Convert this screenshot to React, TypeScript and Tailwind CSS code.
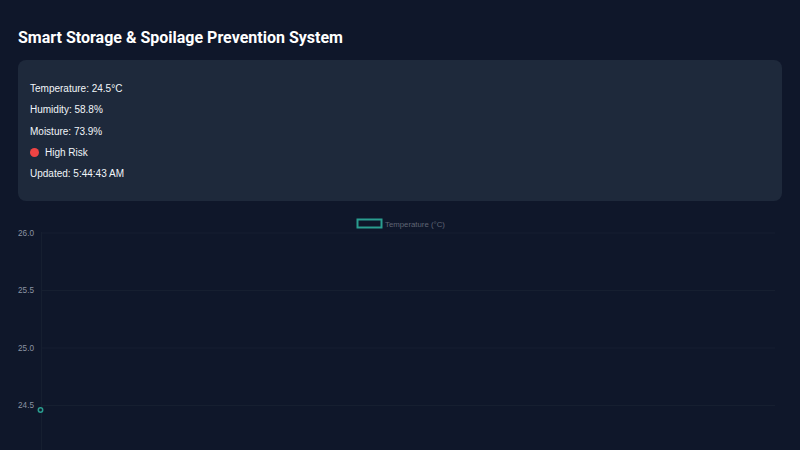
import React from 'react';

const readings = [
  'Temperature: 24.5°C',
  'Humidity: 58.8%',
  'Moisture: 73.9%',
];

const ticks = [
  { label: '26.0', y: 14.5 },
  { label: '25.5', y: 72 },
  { label: '25.0', y: 129.5 },
  { label: '24.5', y: 187 },
];

const TempChart: React.FC = () => (
  <svg width="764" height="240" viewBox="0 0 764 240" className="block">
    <rect x="339.5" y="1.5" width="24" height="8" fill="none" stroke="#2a9d8f" strokeWidth="2" />
    <text x="367" y="8.5" fontSize="7.8" fill="#5f6575" fontFamily="Liberation Sans, Arial, sans-serif">
      Temperature (°C)
    </text>
    {ticks.map((t) => (
      <g key={t.label}>
        <line x1="23" x2="757" y1={t.y + 0.5} y2={t.y + 0.5} stroke="#161f30" strokeWidth="1" />
        <text
          x="16"
          y={t.y + 3}
          fontSize="8.2"
          textAnchor="end"
          fill="#8b93a3"
          fontFamily="Liberation Sans, Arial, sans-serif"
        >
          {t.label}
        </text>
      </g>
    ))}
    <line x1="23.5" x2="23.5" y1="14" y2="240" stroke="#161f30" strokeWidth="1" />
    <circle cx="22.5" cy="192" r="2.2" fill="#0f172a" stroke="#2a9d8f" strokeWidth="1.5" />
  </svg>
);

export default function App() {
  return (
    <div
      className="w-[800px] h-[450px] overflow-hidden bg-[#0f172a] text-white px-[18px] pt-[28px]"
      style={{ fontFamily: 'Roboto, "Liberation Sans", Arial, sans-serif' }}
    >
      <h1 className="text-[16px] font-bold leading-[20px]">
        Smart Storage &amp; Spoilage Prevention System
      </h1>
      <div
        className="mt-[12px] h-[141px] rounded-[8px] bg-[#1e293b] px-[12px] pt-[18px] flex flex-col"
        style={{ fontFamily: '"Liberation Sans", Arial, sans-serif' }}
      >
        {readings.map((r) => (
          <p key={r} className="text-[10px] leading-[21.3px] h-[21.3px] text-[#f1f5f9]">
            {r}
          </p>
        ))}
        <div className="flex items-center gap-[6px] h-[21.3px] text-[10px] text-[#f1f5f9]">
          <span className="w-[9px] h-[9px] rounded-full bg-[#ef4444]" />
          <span>High Risk</span>
        </div>
        <p className="text-[10px] leading-[21.3px] h-[21.3px] text-[#f1f5f9]">Updated: 5:44:43 AM</p>
      </div>
      <div className="mt-[17px]">
        <TempChart />
      </div>
    </div>
  );
}
